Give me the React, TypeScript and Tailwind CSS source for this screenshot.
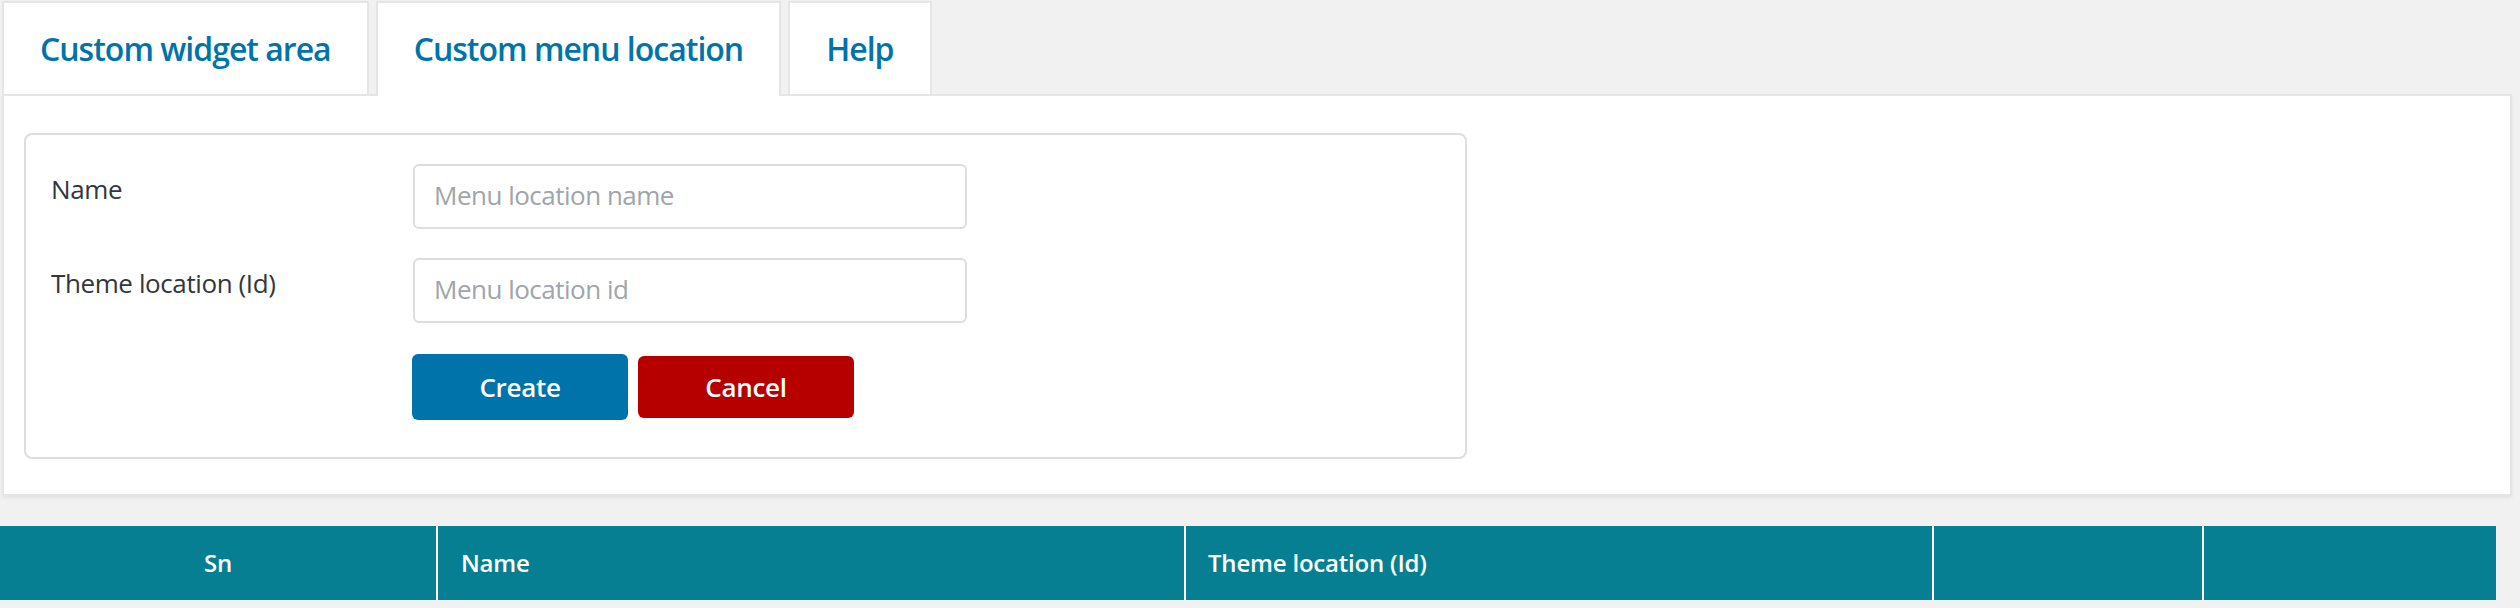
import React from 'react';

const tabs = [
  { label: 'Custom widget area', active: false },
  { label: 'Custom menu location', active: true },
  { label: 'Help', active: false },
];

const columns = [
  { label: 'Sn', width: 'w-[436px]', align: 'justify-center' },
  { label: 'Name', width: 'w-[746px]', align: 'pl-[23px]' },
  { label: 'Theme location (Id)', width: 'w-[746px]', align: 'pl-[22px]' },
  { label: '', width: 'w-[268px]', align: '' },
  { label: '', width: 'w-[292px]', align: '' },
];

function Field({ label, placeholder, last }: { label: string; placeholder: string; last?: boolean }) {
  return (
    <div className={`flex items-start ${last ? '' : 'mb-[29px]'}`}>
      <label className="w-[387px] shrink-0 pl-[25px] pt-[7px] text-[26px] leading-[36px] tracking-[-0.4px] text-[#32373c]">
        {label}
      </label>
      <input
        type="text"
        placeholder={placeholder}
        className="h-[65px] w-[554px] rounded-[6px] border-2 border-[#dddddd] bg-white px-[19px] pb-[3px] text-[26px] tracking-[-0.5px] text-[#32373c] outline-none placeholder:text-[#a0a5aa]"
      />
    </div>
  );
}

export default function App() {
  return (
    <div className="min-h-[608px] w-[2520px] bg-[#f1f1f1] pt-[1px] font-['Open_Sans',sans-serif]">
      <div className="pl-[2px] pr-[8px]">
        <div className="flex items-end gap-[7px]">
          {tabs.map((tab) => (
            <div
              key={tab.label}
              className={`relative z-10 flex h-[93px] items-center border-2 border-b-0 border-[#e5e5e5] bg-white px-[36px] text-[32px] font-semibold tracking-[-1px] text-[#0073aa] ${
                tab.active ? '-mb-[2px] h-[95px]' : ''
              }`}
            >
              <span className={tab.active ? '-mt-[1px]' : 'mt-[1px]'}>{tab.label}</span>
            </div>
          ))}
        </div>

        <div className="border-2 border-[#e5e5e5] bg-white pb-[35px] pl-[20px] pt-[37px] shadow-[0_2px_3px_rgba(0,0,0,0.06)]">
          <div className="w-[1443px] rounded-[8px] border-2 border-[#dddddd] pb-[37px] pt-[29px]">
            <Field label="Name" placeholder="Menu location name" />
            <Field label="Theme location (Id)" placeholder="Menu location id" />
            <div className="mt-[31px] flex items-center gap-[10px] pl-[386px]">
              <button className="h-[66px] w-[216px] rounded-[6px] bg-[#0073aa] text-[26px] font-semibold tracking-[-0.3px] text-white">
                Create
              </button>
              <button className="h-[62px] w-[216px] rounded-[6px] bg-[#b60000] text-[26px] font-semibold tracking-[-0.3px] text-white">
                Cancel
              </button>
            </div>
          </div>
        </div>
      </div>

      <div className="mt-[30px] flex w-[2496px] gap-[2px] bg-white">
        {columns.map((col, i) => (
          <div
            key={i}
            className={`flex h-[74px] items-center bg-[#077f92] text-[24px] font-semibold tracking-[-0.2px] text-white ${col.width} ${col.align}`}
          >
            {col.label}
          </div>
        ))}
      </div>
    </div>
  );
}
